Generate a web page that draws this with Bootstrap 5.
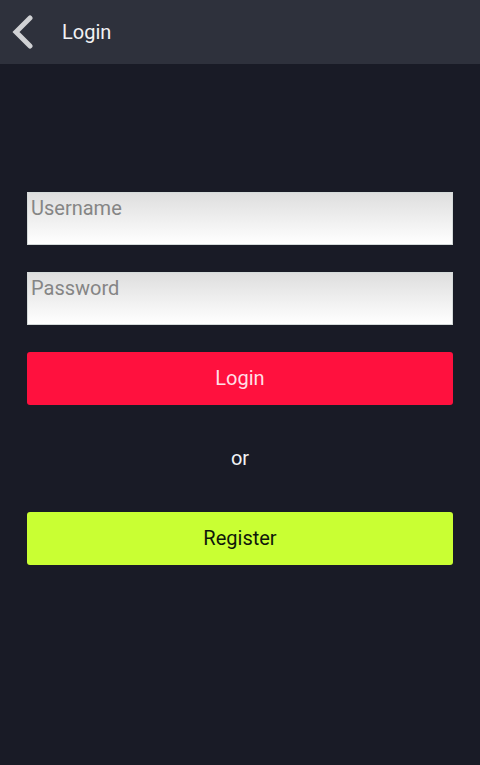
<!DOCTYPE html>
<html lang="en">
<head>
<meta charset="utf-8">
<meta name="viewport" content="width=device-width, initial-scale=1">
<title>Login</title>
<link href="https://cdn.jsdelivr.net/npm/bootstrap@5.3.0/dist/css/bootstrap.min.css" rel="stylesheet">
<style>
body { background: #191b26; color: #f2f2f4; font-family: Roboto, sans-serif; font-size: 20px; line-height: 24px; }
.top-bar { background: #2e313c; height: 64px; padding: 0 12px; }
.back-btn { line-height: 0; }
.top-title { font-size: 20px; line-height: 24px; margin-left: 28px; }
.login-form { padding: 128px 27px 27px; gap: 27px; }
.field { height: 53px; padding: 3px 3px 24px; font-size: 20px; line-height: 24px; border: 1px solid #d5dbda; border-radius: 0; background: linear-gradient(#dedede, #fff); color: #333; }
.field:focus { background: linear-gradient(#dedede, #fff); }
.field::placeholder { color: #858585; }
.action { height: 53px; border: 0; border-radius: 3px; font-size: 20px; line-height: 24px; padding: 0 0 2px; }
.action-login, .action-login:hover { background: #ff113e; color: #ffdfe6; }
.action-register, .action-register:hover { background: #c9ff33; color: #10180a; }
.divider-text { height: 53px; padding-bottom: 2px; }
</style>
<script src="https://cdn.jsdelivr.net/npm/bootstrap@5.3.0/dist/js/bootstrap.bundle.min.js"></script>
</head>
<body>
<header class="top-bar d-flex align-items-center">
  <button type="button" class="btn back-btn p-0 border-0" aria-label="Back">
    <svg width="22" height="34" viewBox="0 0 22 34" fill="none" stroke="#d0d1d4" stroke-width="5"><path d="M18 3 4 17 18 31" stroke-linecap="round"/></svg>
  </button>
  <h1 class="top-title mb-0 fw-normal">Login</h1>
</header>
<main>
  <form class="login-form d-flex flex-column">
    <input class="form-control field" type="text" id="username" aria-label="Username" placeholder="Username" autocomplete="username">
    <input class="form-control field" type="password" id="password" aria-label="Password" placeholder="Password" autocomplete="current-password">
    <button type="submit" class="btn w-100 action action-login">Login</button>
    <div class="divider-text d-flex align-items-center justify-content-center">or</div>
    <button type="button" class="btn w-100 action action-register">Register</button>
  </form>
</main>
</body>
</html>
